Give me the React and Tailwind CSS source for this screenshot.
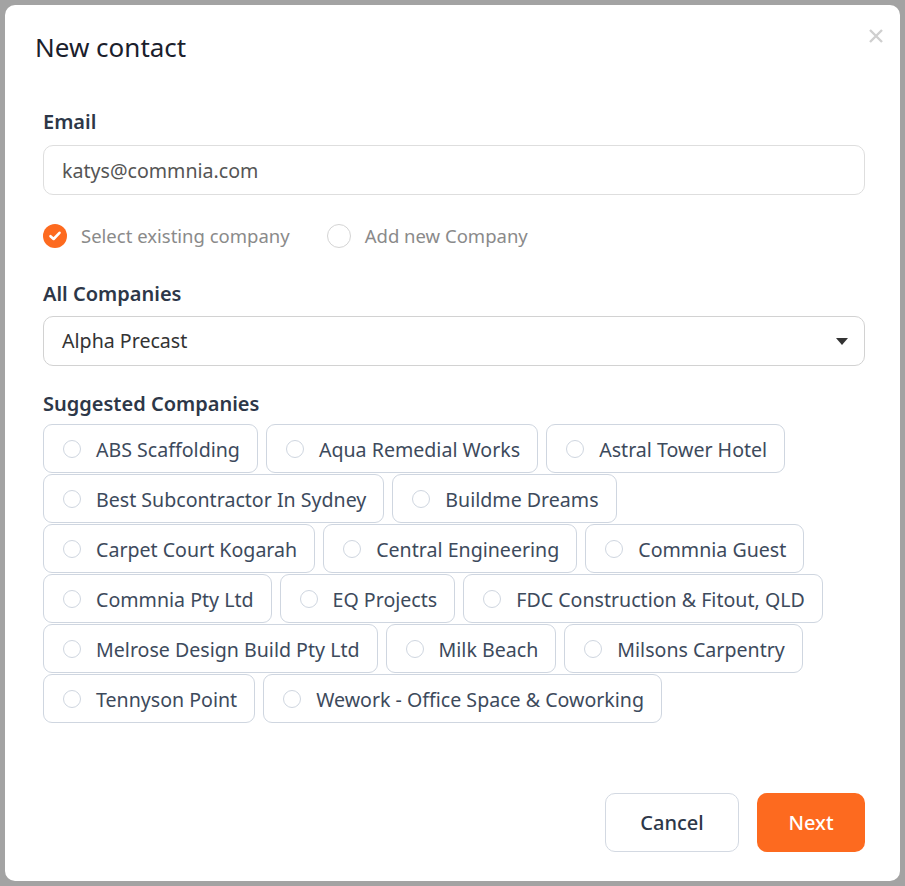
import { useState } from "react";

const companies = [
  "ABS Scaffolding",
  "Aqua Remedial Works",
  "Astral Tower Hotel",
  "Best Subcontractor In Sydney",
  "Buildme Dreams",
  "Carpet Court Kogarah",
  "Central Engineering",
  "Commnia Guest",
  "Commnia Pty Ltd",
  "EQ Projects",
  "FDC Construction & Fitout, QLD",
  "Melrose Design Build Pty Ltd",
  "Milk Beach",
  "Milsons Carpentry",
  "Tennyson Point",
  "Wework - Office Space & Coworking",
];

const Check = () => (
  <span className="flex h-[24px] w-[24px] items-center justify-center rounded-full bg-[#fd6a1f]">
    <svg width="14" height="14" viewBox="0 0 14 14" fill="none" stroke="white" strokeWidth="2.6" strokeLinecap="round" strokeLinejoin="round">
      <path d="M2.5 7.2 L5.6 10 L11.5 3.8" />
    </svg>
  </span>
);

const App = () => {
  const [mode, setMode] = useState("existing");
  const [picked, setPicked] = useState(null);

  return (
    <div className="min-h-screen w-full bg-[#a3a3a3] p-[5px] font-['Noto_Sans',sans-serif]">
      <div className="relative flex h-[876px] w-[895px] flex-col rounded-[10px] bg-white pt-[24px] pb-[29px] pl-[38px] pr-[35px]">
        {/* close */}
        <button type="button" className="absolute right-[16px] top-[23px] text-[#cfcfcf]">
          <svg width="16" height="16" viewBox="0 0 16 16" fill="none" stroke="currentColor" strokeWidth="2.4">
            <path d="M2 2 L14 14 M14 2 L2 14" />
          </svg>
        </button>

        <h2 className="-ml-[8px] text-[26px] leading-[36px] text-[#1a202c]">New contact</h2>

        <label className="mt-[43px] text-[20px] font-semibold leading-[28px] text-[#2d3748]">Email</label>
        <input
          defaultValue="katys@commnia.com"
          className="mt-[9px] h-[50px] w-full rounded-[10px] border border-[#dedede] px-[18px] text-[19.6px] text-[#555] outline-none"
        />

        <div className="mt-[29px] flex h-[24px] items-center gap-[37px]">
          <button type="button" onClick={() => setMode("existing")} className="flex items-center gap-[14px]">
            {mode === "existing" ? <Check /> : <span className="h-[24px] w-[24px] rounded-full border border-[#d4d4d4]" />}
            <span className="text-[18.5px] text-[#8a8a8a]">Select existing company</span>
          </button>
          <button type="button" onClick={() => setMode("new")} className="flex items-center gap-[14px]">
            {mode === "new" ? <Check /> : <span className="h-[24px] w-[24px] rounded-full border border-[#d4d4d4]" />}
            <span className="text-[18.5px] text-[#8a8a8a]">Add new Company</span>
          </button>
        </div>

        <label className="mt-[32px] text-[20px] font-semibold leading-[28px] text-[#2d3748]">All Companies</label>
        <div className="mt-[8px] flex h-[50px] w-full items-center justify-between rounded-[10px] border border-[#d2d2d2] pl-[18px] pr-[16px]">
          <span className="text-[19.6px] text-[#333]">Alpha Precast</span>
          <svg width="12" height="7" viewBox="0 0 12 7">
            <path d="M0 0 H12 L6 7 Z" fill="#333" />
          </svg>
        </div>

        <label className="mt-[24px] text-[20px] font-semibold leading-[28px] text-[#2d3748]">Suggested Companies</label>
        <div className="mt-[6px] flex flex-wrap gap-x-[8px] gap-y-px pr-[30px]">
          {companies.map((name) => (
            <button
              key={name}
              type="button"
              onClick={() => setPicked(name)}
              className="flex h-[49px] items-center gap-[15px] rounded-[9px] border border-[#cfd6e0] pl-[19px] pr-[17px]"
            >
              <span
                className={
                  picked === name
                    ? "h-[18px] w-[18px] rounded-full border-[5px] border-[#fd6a1f]"
                    : "h-[18px] w-[18px] rounded-full border border-[#cfd6e0]"
                }
              />
              <span className="pt-[2px] text-[19.6px] text-[#3d4a5c]">{name}</span>
            </button>
          ))}
        </div>

        <div className="mt-auto flex justify-end gap-[18px]">
          <button type="button" className="h-[59px] w-[134px] rounded-[10px] border border-[#d3d9e2] text-[20px] font-medium text-[#2d3748]">
            Cancel
          </button>
          <button type="button" className="h-[59px] w-[108px] rounded-[10px] bg-[#fd6a1f] text-[20px] font-medium text-white">
            Next
          </button>
        </div>
      </div>
    </div>
  );
};

export default App;
